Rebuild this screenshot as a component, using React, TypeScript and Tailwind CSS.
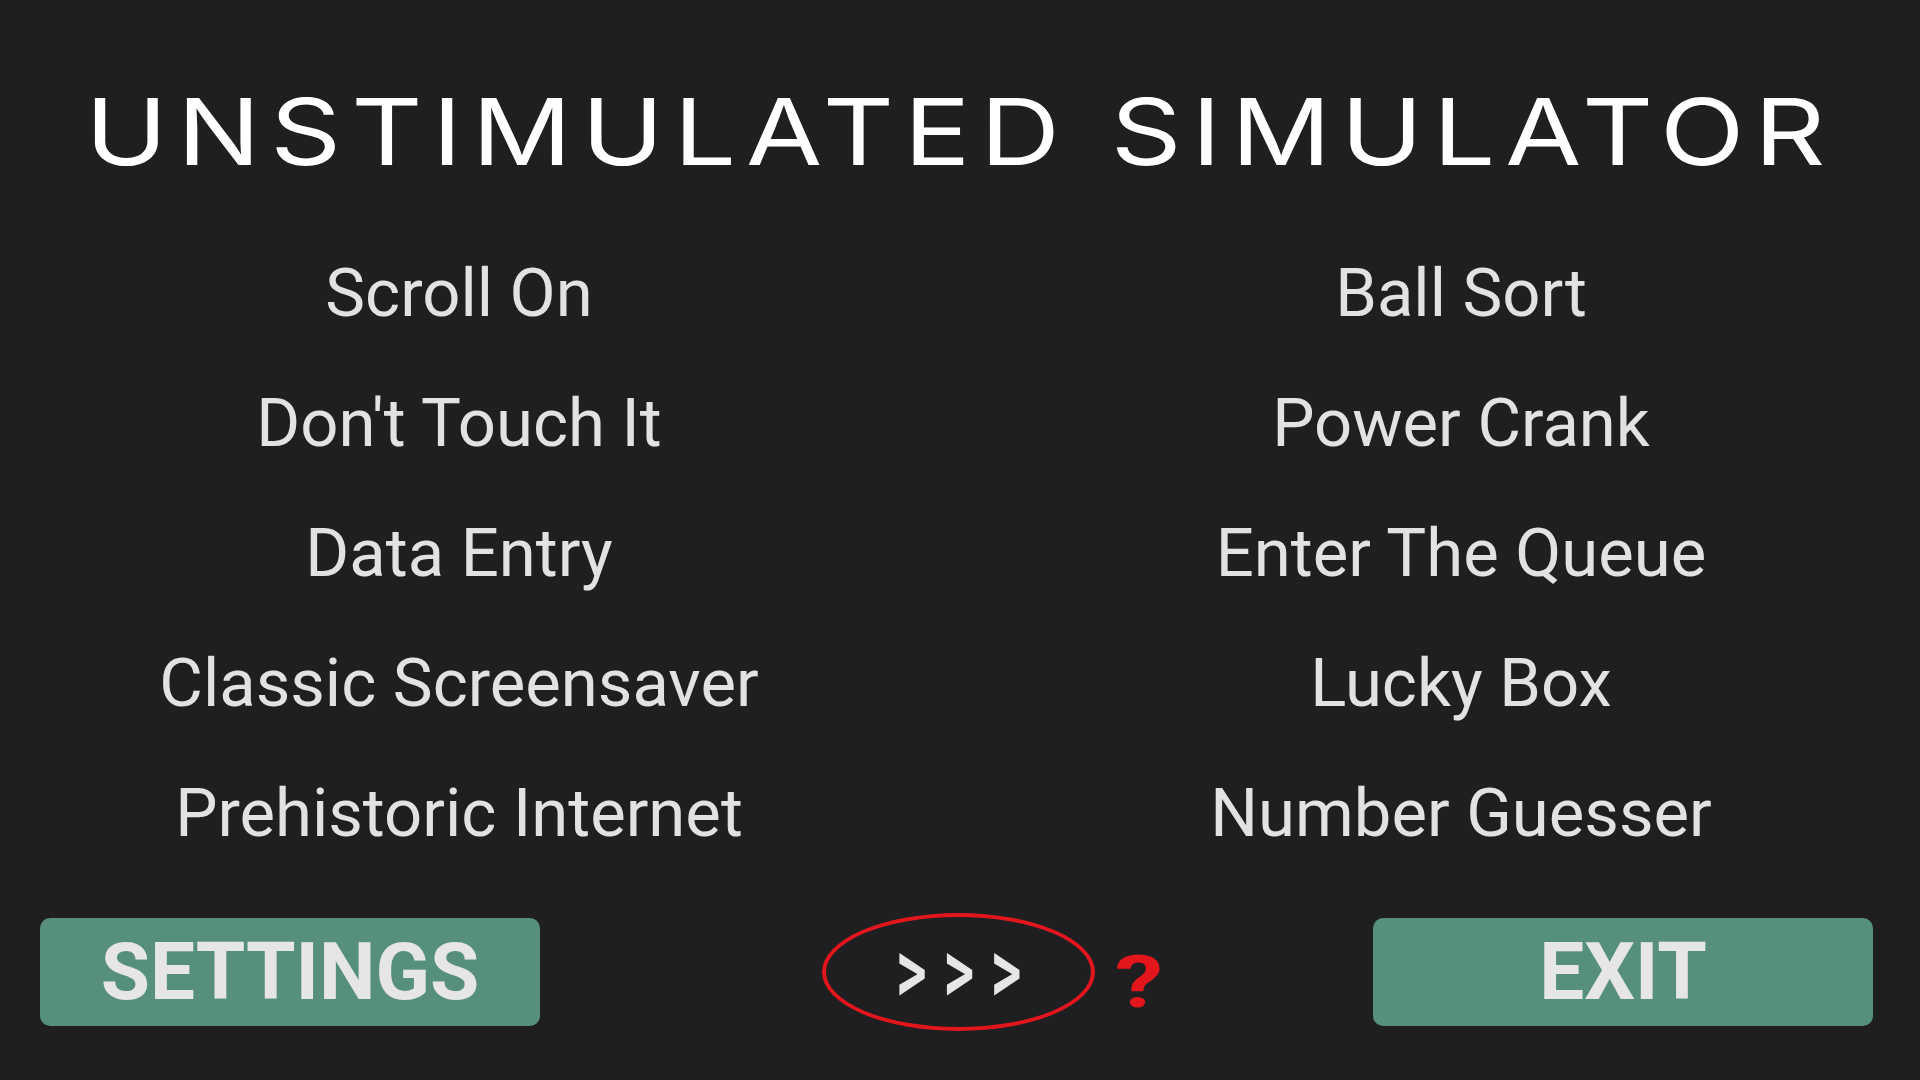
const leftGames = [
  "Scroll On",
  "Don't Touch It",
  "Data Entry",
  "Classic Screensaver",
  "Prehistoric Internet",
];

const rightGames = [
  "Ball Sort",
  "Power Crank",
  "Enter The Queue",
  "Lucky Box",
  "Number Guesser",
];

const MenuButton = ({ label }: { label: string }) => {
  return (
    <button className="flex h-[108px] w-[500px] items-center justify-center rounded-[10px] bg-[#57907a] font-['Roboto',sans-serif] text-[80px] font-bold leading-none text-[#e6e6e6]">
      {label}
    </button>
  );
};

const App = () => {
  return (
    <main className="flex h-[1080px] w-[1920px] flex-col overflow-hidden bg-[#1f1f21]">
      {/* Title */}
      <div className="flex justify-center pt-[86px]">
        <h1 className="scale-x-[1.2] font-['Inter',sans-serif] text-[92px] font-normal leading-none tracking-[0.09em] whitespace-nowrap text-white">
          UNSTIMULATED SIMULATOR
        </h1>
      </div>

      {/* Game list */}
      <div className="mx-auto mt-[50px] grid grid-cols-[910px_910px] gap-x-[92px]">
        <ul className="flex flex-col">
          {leftGames.map((game) => (
            <li
              key={game}
              className="text-center font-['Roboto',sans-serif] text-[67px] leading-[130px] text-[#e2e2e2]"
            >
              {game}
            </li>
          ))}
        </ul>
        <ul className="flex flex-col">
          {rightGames.map((game) => (
            <li
              key={game}
              className="text-center font-['Roboto',sans-serif] text-[67px] leading-[130px] text-[#e2e2e2]"
            >
              {game}
            </li>
          ))}
        </ul>
      </div>

      {/* Bottom bar */}
      <div className="mt-[35px] flex h-[118px] items-center pl-[40px] pr-[47px]">
        <MenuButton label="SETTINGS" />
        <button className="ml-[282px] flex h-[118px] w-[273px] items-center justify-center rounded-[50%] border-[4px] border-[#e3161d] text-[#e6e6e6]">
          <span className="scale-x-[0.65] pl-[25px] font-['Roboto',sans-serif] text-[92px] font-medium leading-none tracking-[25px]">
            &gt;&gt;&gt;
          </span>
        </button>
        <span className="mt-[22px] ml-[26px] scale-x-[1.35] font-['Roboto',sans-serif] text-[72px] font-bold leading-none text-[#e3161d]">
          ?
        </span>
        <div className="ml-auto">
          <MenuButton label="EXIT" />
        </div>
      </div>
    </main>
  );
};

export default App;
